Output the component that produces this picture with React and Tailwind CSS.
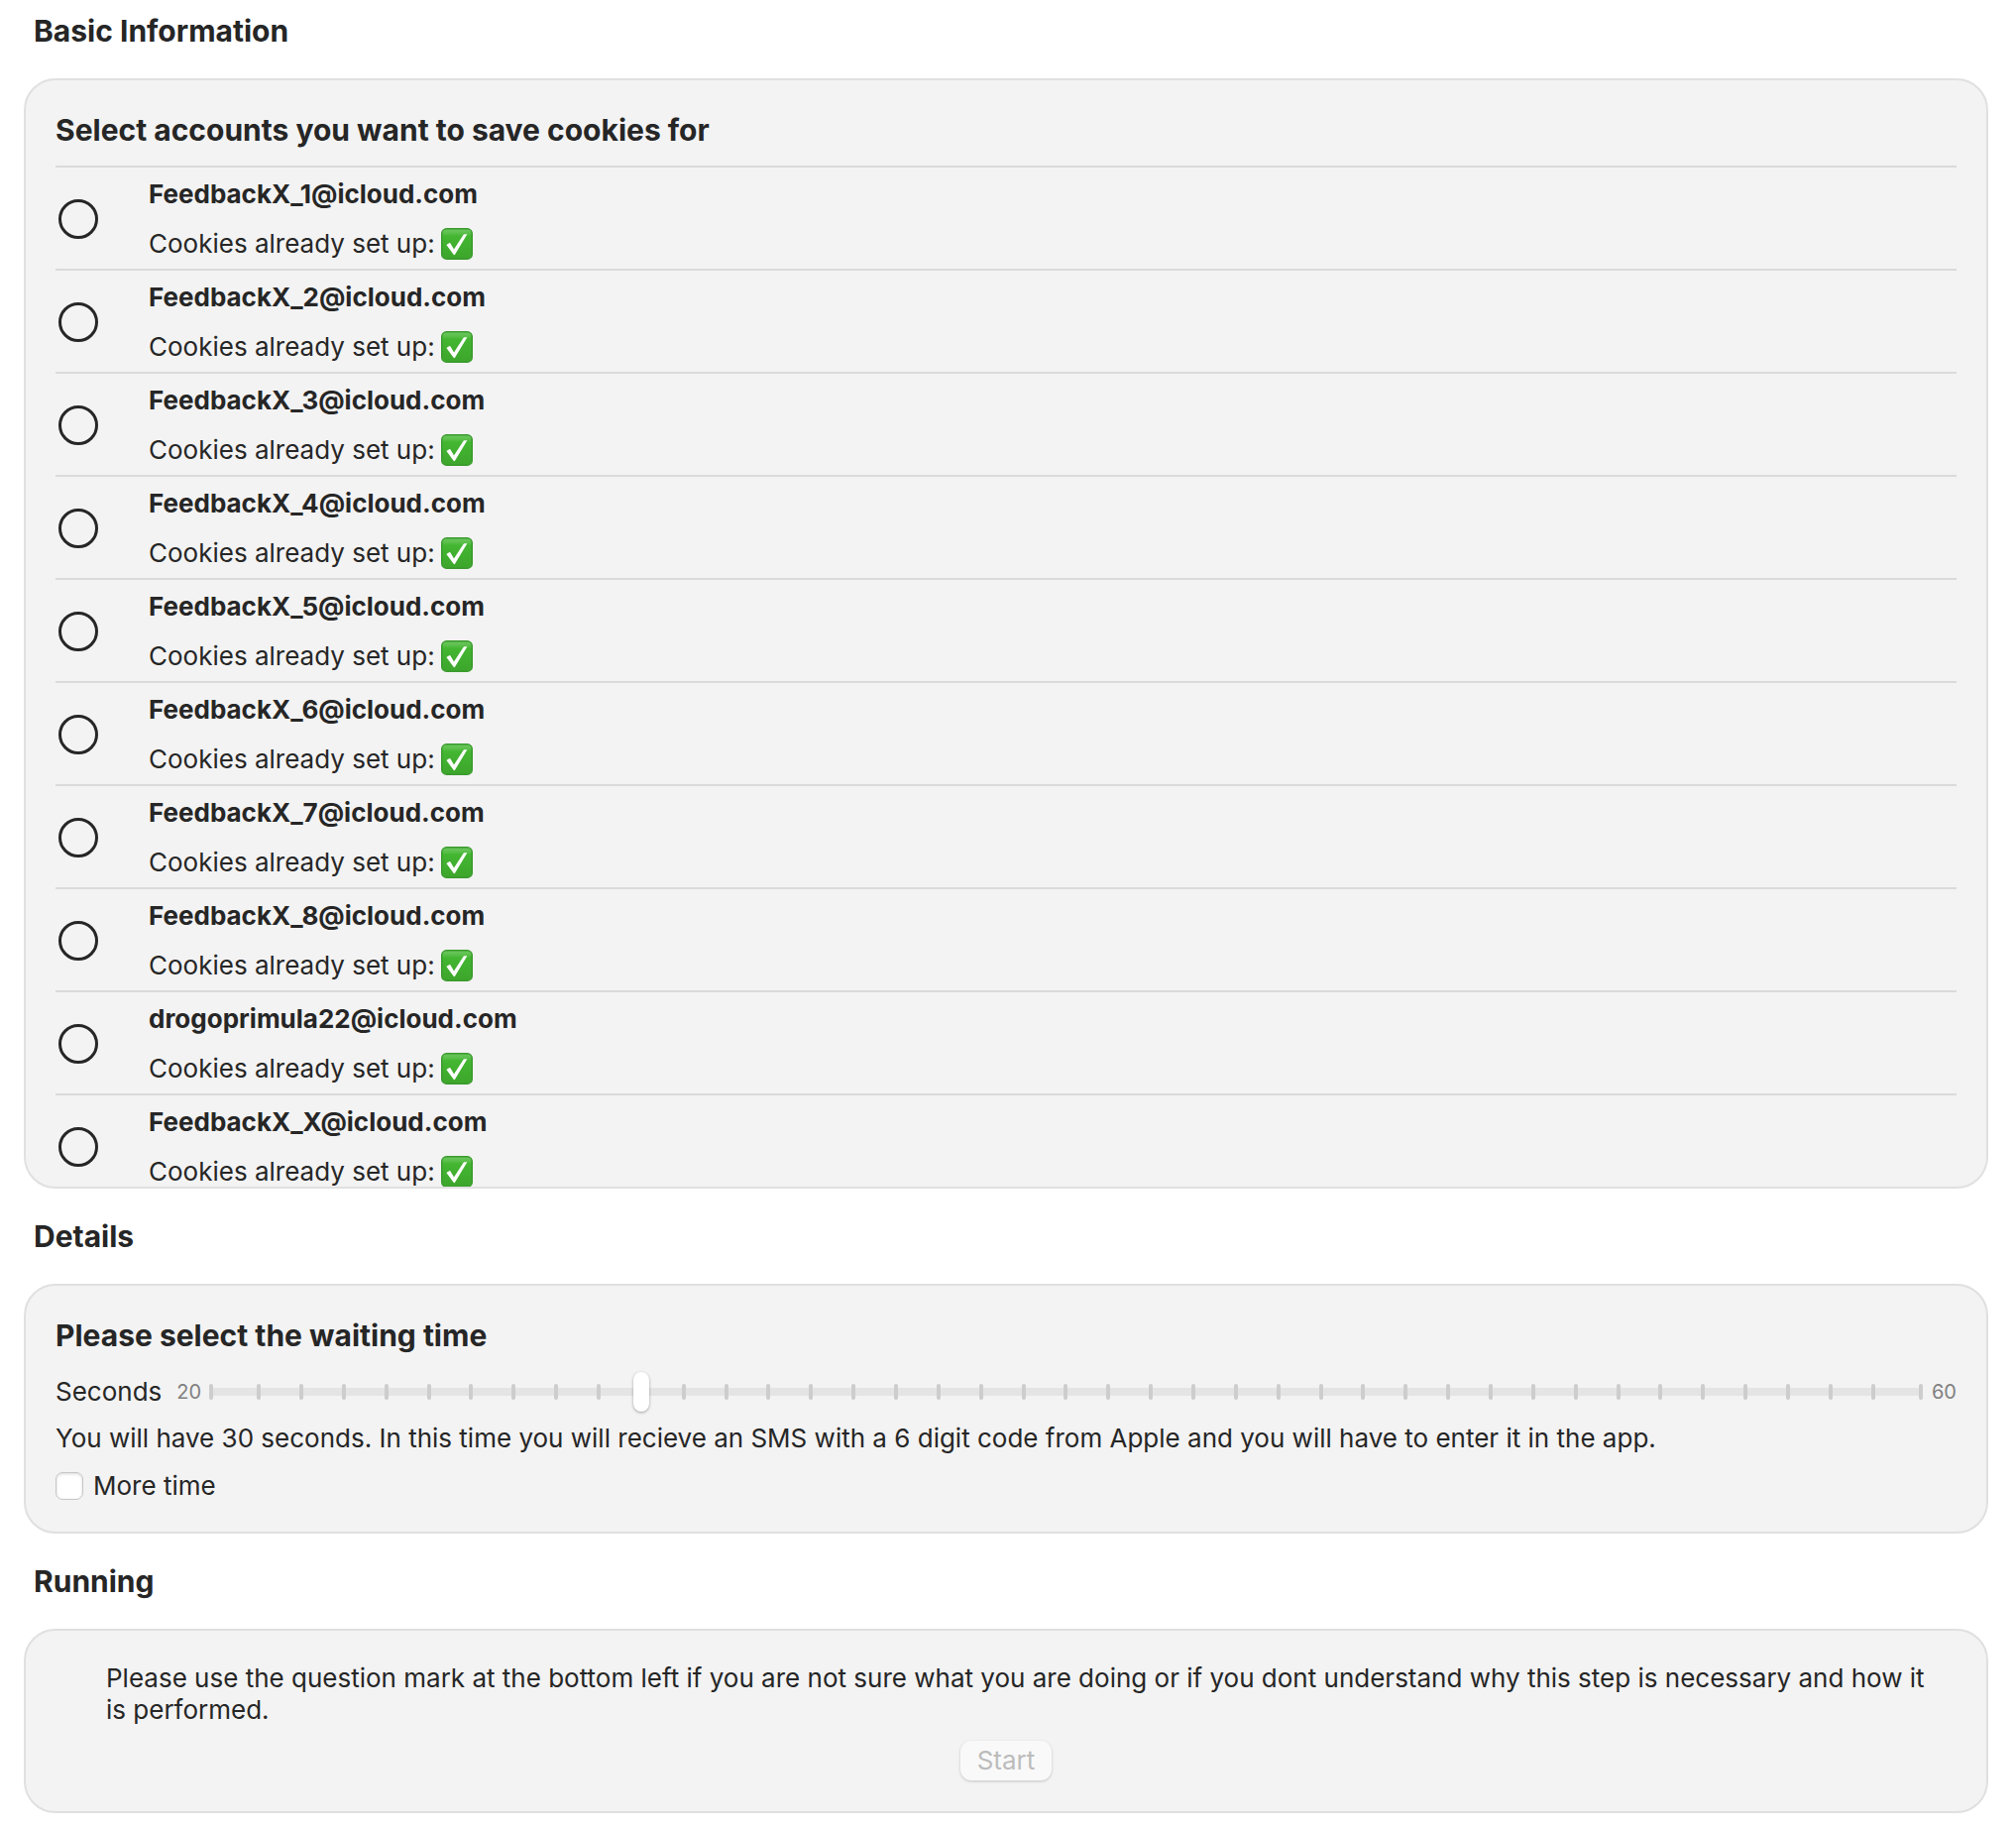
import { useState } from "react";

const ACCOUNTS = [
  "FeedbackX_1@icloud.com",
  "FeedbackX_2@icloud.com",
  "FeedbackX_3@icloud.com",
  "FeedbackX_4@icloud.com",
  "FeedbackX_5@icloud.com",
  "FeedbackX_6@icloud.com",
  "FeedbackX_7@icloud.com",
  "FeedbackX_8@icloud.com",
  "drogoprimula22@icloud.com",
  "FeedbackX_X@icloud.com",
];

const INNER_TICKS = Array.from({ length: 39 }, (_, i) => i);

function CheckMark() {
  return (
    <svg viewBox="0 0 33 33" className="size-8 shrink-0" role="img" aria-label="yes">
      <defs>
        <linearGradient id="mark" x1="0" y1="0" x2="0" y2="1">
          <stop offset="0" stopColor="#6cc75f" />
          <stop offset="0.14" stopColor="#5cc04c" />
          <stop offset="0.24" stopColor="#43b631" />
          <stop offset="1" stopColor="#3da52c" />
        </linearGradient>
      </defs>
      <rect x="0.75" y="0.75" width="31.5" height="31.5" rx="5" fill="url(#mark)" stroke="#3a9a2d" strokeWidth="1.5" />
      <path d="M5.6 17.6L8.4 15.6Q9.3 15.2 9.8 16.1L13.4 22.2L23.3 6.9Q23.6 6.4 24.2 6.4L27.2 6.4L14.6 27.4Q13.7 28.6 12.8 27.3Z" fill="#fff" />
    </svg>
  );
}

function Section({ title, children }) {
  return (
    <section className="flex flex-col gap-[30px]">
      <h2 className="pl-[10px] text-[30px] leading-9 font-bold">{title}</h2>
      <div className="overflow-hidden rounded-[32px] border-2 border-[#e0e0e0] bg-[#f3f3f3] px-[30px] pt-8">
        {children}
      </div>
    </section>
  );
}

function AccountRow({ email }) {
  const id = "account-" + email;
  return (
    <li className="flex items-center gap-[51px] border-t-2 border-[#dadada] pt-[11px] pb-[9px]">
      <input
        id={id}
        type="checkbox"
        className="ml-[3px] size-10 shrink-0 appearance-none rounded-full border-[3px] border-[#262626] checked:bg-[#262626]"
      />
      <label htmlFor={id} className="flex flex-col gap-[18px]">
        <span className="font-bold">{email}</span>
        <span className="flex h-8 items-center gap-[6px]">
          Cookies already set up:
          <CheckMark />
        </span>
      </label>
    </li>
  );
}

function WaitSlider({ value, onChange }) {
  return (
    <div className="mt-[19px] flex items-center">
      <label htmlFor="seconds">Seconds</label>
      <span className="ml-[15px] text-xl leading-6 text-[#808080]">20</span>
      <div className="mr-[9px] ml-2 grid flex-1 items-center">
        <div className="col-start-1 row-start-1 h-2 rounded-full bg-[#e4e4e4]" />
        <div className="col-start-1 row-start-1 flex">
          <span className="h-4 w-1 rounded-full bg-[#cdcdcd]" />
          <div className="mx-11 flex flex-1 justify-between">
            {INNER_TICKS.map((i) => (
              <span key={i} className="h-4 w-1 rounded-full bg-[#cdcdcd]" />
            ))}
          </div>
          <span className="h-4 w-1 rounded-full bg-[#cdcdcd]" />
        </div>
        <input
          id="seconds"
          type="range"
          min="20"
          max="60"
          value={value}
          onChange={(e) => onChange(Number(e.target.value))}
          className="z-10 col-start-1 row-start-1 m-0 h-10 w-full appearance-none bg-transparent [&::-webkit-slider-thumb]:h-10 [&::-webkit-slider-thumb]:w-4 [&::-webkit-slider-thumb]:appearance-none [&::-webkit-slider-thumb]:rounded-full [&::-webkit-slider-thumb]:bg-white [&::-webkit-slider-thumb]:shadow-[0_1px_3px_rgba(0,0,0,0.35)]"
        />
      </div>
      <span className="text-xl leading-6 text-[#808080]">60</span>
    </div>
  );
}

export default function App() {
  const [seconds, setSeconds] = useState(30);
  return (
    <main className="flex min-h-screen flex-col gap-[30px] bg-white pt-[13px] pr-7 pb-[15px] pl-6 font-['Inter',sans-serif] text-[26px] leading-8 text-[#262626]">
      <Section title="Basic Information">
        <h3 className="text-[30px] leading-9 font-bold">Select accounts you want to save cookies for</h3>
        <ul className="mt-[18px] h-[1030px] overflow-hidden">
          {ACCOUNTS.map((email) => (
            <AccountRow key={email} email={email} />
          ))}
        </ul>
      </Section>

      <Section title="Details">
        <h3 className="text-[30px] leading-9 font-bold">Please select the waiting time</h3>
        <WaitSlider value={seconds} onChange={setSeconds} />
        <p className="mt-[11px]">
          You will have {seconds} seconds. In this time you will recieve an SMS with a 6 digit code from Apple and you will have to enter it in the app.
        </p>
        <div className="mt-4 mb-[30px] flex items-center gap-[10px]">
          <input
            id="more-time"
            type="checkbox"
            className="size-7 shrink-0 appearance-none rounded-[7px] border border-[#c6c6c6] bg-white shadow-[inset_0_1px_3px_rgba(0,0,0,0.15)] checked:bg-[#007aff]"
          />
          <label htmlFor="more-time">More time</label>
        </div>
      </Section>

      <Section title="Running">
        <div className="flex flex-col items-center pb-[31px]">
          <p className="pr-4 pl-[51px]">
            Please use the question mark at the bottom left if you are not sure what you are doing or if you dont understand why this step is necessary and how it is performed.
          </p>
          <button
            type="button"
            disabled
            className="mt-[15px] h-10 rounded-[11px] bg-[#f9f9f9] px-[17px] text-[#bcbcbc] shadow-[0_1px_3px_rgba(0,0,0,0.2)]"
          >
            Start
          </button>
        </div>
      </Section>
    </main>
  );
}
